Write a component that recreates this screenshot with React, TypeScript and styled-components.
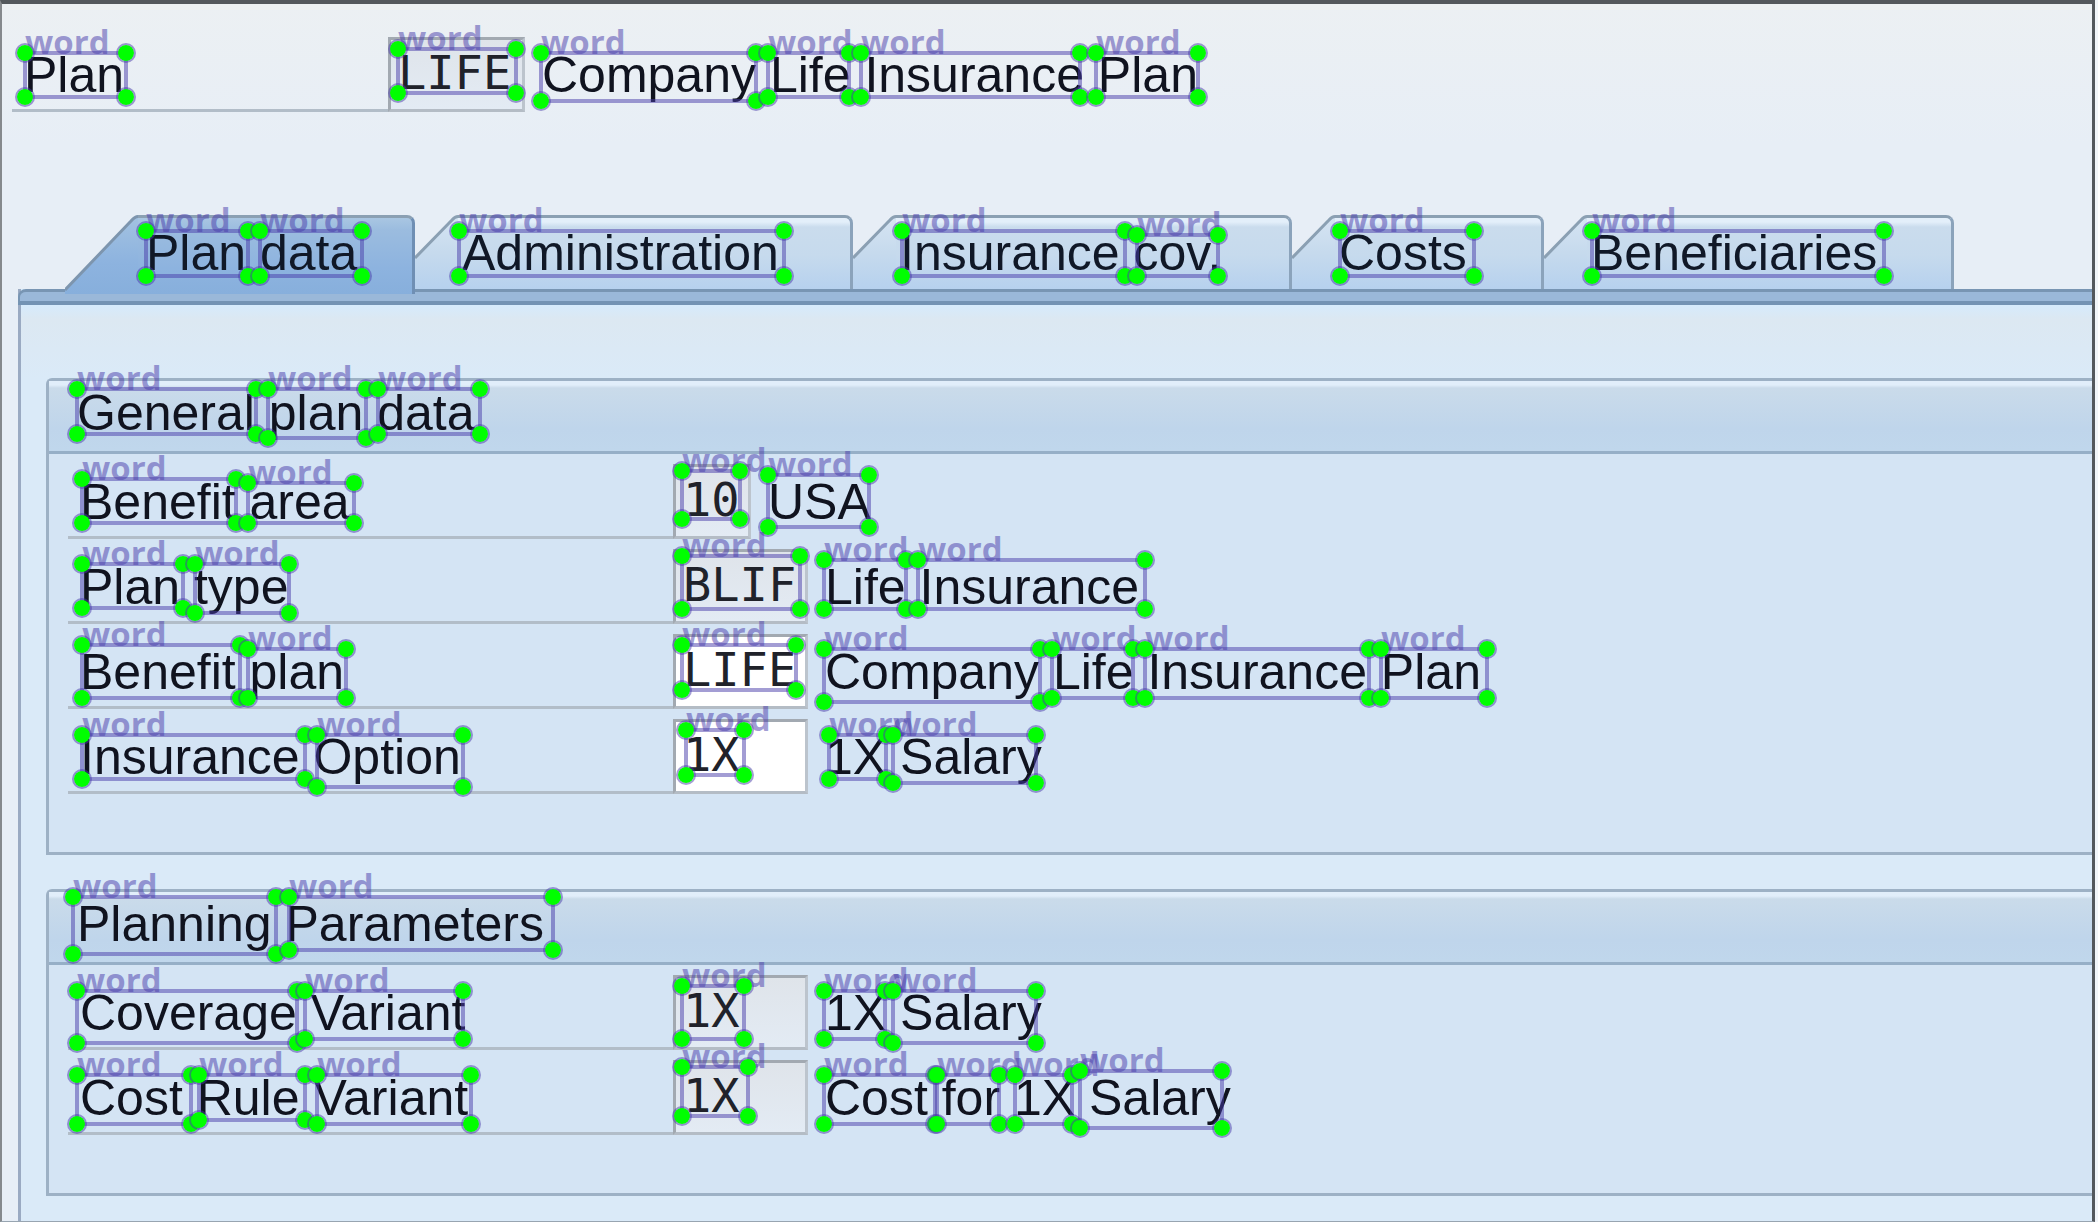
import React from "react";
import styled, { createGlobalStyle } from "styled-components";

const GlobalStyle = createGlobalStyle`
  *, *::before, *::after { box-sizing: border-box; }
  body { margin: 0; background: #f1f5f9; }
`;

const sans = `"Liberation Sans", Arial, sans-serif`;
const mono = `"DejaVu Sans Mono", "Liberation Mono", monospace`;

const Screen = styled.main`
  position: relative;
  display: flex;
  flex-direction: column;
  min-height: 100vh;
  margin-right: 3px;
  border: solid #53585d;
  border-width: 4px 3px 1px 2px;
  border-left-color: #85898d;
  border-bottom-color: #98a5b1;
  background: linear-gradient(#ecf0f3 0, #e7eef6 140px, #e7eef6 100%);
  color: #10131f;
  font: 50px/54px ${sans};
`;

const HeaderForm = styled.div`
  padding: 33px 0 0 10px;
`;

const Row = styled.div`
  display: flex;
  height: 75px;
`;

const Label = styled.label<{ $width: number; $indent: number }>`
  flex: none;
  width: ${(p) => p.$width}px;
  padding-left: ${(p) => p.$indent}px;
  border-bottom: 3px solid #b2bdc8;
  line-height: 77px;
`;

const Field = styled.input<{ $width: number; $editable?: boolean }>`
  flex: none;
  width: ${(p) => p.$width}px;
  height: 75px;
  margin: 0;
  padding: 0 0 5px 7px;
  border: 3px solid #a2a9b1;
  border-right-color: #bcc4cd;
  border-bottom-color: #b4bcc5;
  border-radius: 0;
  outline: none;
  background: ${(p) => (p.$editable ? "#ffffff" : "linear-gradient(#dfe4ea, #e3ebf4)")};
  color: #20222a;
  font: 47px/60px ${mono};
`;

const Description = styled.span`
  padding-left: 17px;
  line-height: 77px;
  white-space: nowrap;
`;

const TabStrip = styled.div`
  position: relative;
  z-index: 1;
  display: flex;
  height: 74px;
  margin-top: 103px;
  padding-left: 63px;
`;

const Tab = styled.button<{ $active?: boolean; $width: number }>`
  display: flex;
  flex: none;
  width: ${(p) => p.$width}px;
  height: ${(p) => (p.$active ? 79 : 74)}px;
  margin: 0;
  padding: 0;
  border: 0;
  background: none;
  color: #101827;
  font: 50px/54px ${sans};
  text-align: left;
`;

const TabSlope = styled.svg`
  display: block;
  flex: none;
`;

const TabFace = styled.span<{ $active?: boolean }>`
  flex: 1;
  height: 100%;
  padding: 8px 0 0 ${(p) => (p.$active ? 8 : 4)}px;
  border-top: 3px solid #8ba0b3;
  border-right: 3px solid ${(p) => (p.$active ? "#6f8fb4" : "#8ba3bb")};
  border-radius: 0 8px 0 0;
  background: ${(p) =>
    p.$active
      ? "linear-gradient(#a9c6e2 0, #9bbcdf 12px, #8db3df 50px, #87afdc 100%)"
      : "linear-gradient(#e3effa 0, #e3effa 4px, #cadced 9px, #c6daed 38px, #b6d1ee 100%)"};
  white-space: nowrap;
`;

const Panel = styled.section`
  flex: 1;
  margin-left: 16px;
  border-left: 3px solid #9aaac2;
  background: linear-gradient(#d5ebfd 15px, #dce8f2 30px, #daeaf8 90px, #daeaf8 100%);
`;

const PanelBand = styled.div`
  height: 16px;
  margin-left: -3px;
  border-top: 3px solid #7895b3;
  border-bottom: 4px solid #7393b4;
  border-left: 2px solid #7895b3;
  border-radius: 8px 0 0 0;
  background: #9ab8d9;
`;

const Groups = styled.div`
  display: flex;
  flex-direction: column;
  gap: 34px;
  padding: 73px 0 24px 25px;
`;

const Group = styled.section`
  border: solid #9db1c5;
  border-width: 3px 0 3px 3px;
  border-radius: 6px 0 0 0;
  background: #d4e4f4;
`;

const GroupTitle = styled.h2`
  height: 73px;
  margin: 0;
  padding: 5px 0 0 28px;
  border-bottom: 3px solid #96afc7;
  background: linear-gradient(#e1eefa 0, #e1eefa 4px, #cadbea 7px, #bfd5eb 48px, #c0d7ec 100%);
  font: 50px/54px ${sans};
`;

const GroupRows = styled.div`
  display: flex;
  flex-direction: column;
  gap: 10px;
  padding: 10px 0 58px 19px;
`;

/* Word annotations drawn over the form. */
const Annotations = styled.div`
  position: absolute;
  top: -4px;
  left: -2px;
  z-index: 2;
  pointer-events: none;
`;

const WordBox = styled.div<{ $x: number; $y: number; $w: number; $h: number }>`
  position: absolute;
  left: ${(p) => p.$x - 2}px;
  top: ${(p) => p.$y - 2}px;
  width: ${(p) => p.$w + 4}px;
  height: ${(p) => p.$h + 4}px;
  border: 4px solid rgba(72, 60, 170, 0.5);
`;

const WordTag = styled.span`
  position: absolute;
  left: -2px;
  bottom: 100%;
  color: rgba(72, 60, 170, 0.5);
  font: 700 33px/26px "Open Sans", "Noto Sans", sans-serif;
  white-space: nowrap;
`;

const Handle = styled.i<{ $right?: boolean; $bottom?: boolean }>`
  position: absolute;
  ${(p) => (p.$right ? "right" : "left")}: -12px;
  ${(p) => (p.$bottom ? "bottom" : "top")}: -12px;
  width: 20px;
  height: 20px;
  border: 2px solid rgba(72, 60, 170, 0.5);
  border-radius: 50%;
  background: #00ff00 padding-box;
`;

type FieldData = {
  id: string;
  label: string;
  value: string;
  width: number;
  text: string;
  editable?: boolean;
};

const general: FieldData[] = [
  { id: "area", label: "Benefit area", value: "10", width: 78, text: "USA" },
  { id: "type", label: "Plan type", value: "BLIF", width: 135, text: "Life Insurance" },
  { id: "plan", label: "Benefit plan", value: "LIFE", width: 135, text: "Company Life Insurance Plan", editable: true },
  { id: "option", label: "Insurance Option", value: "1X", width: 135, text: "1X Salary", editable: true },
];

const planning: FieldData[] = [
  { id: "coverage", label: "Coverage Variant", value: "1X", width: 135, text: "1X Salary" },
  { id: "cost", label: "Cost Rule Variant", value: "1X", width: 135, text: "Cost for 1X Salary" },
];

const tabs = [
  { title: "Plan data", width: 350 },
  { title: "Administration", width: 438 },
  { title: "Insurance cov.", width: 439 },
  { title: "Costs", width: 252 },
  { title: "Beneficiaries", width: 410 },
];

/* left, top, right, bottom of every annotated word */
const words: [number, number, number, number][] = [
  [25, 53, 126, 97], [398, 49, 516, 93], [541, 53, 756, 101], [768, 53, 849, 97],
  [861, 53, 1080, 97], [1096, 53, 1198, 97],
  [146, 231, 248, 276], [260, 231, 362, 276], [459, 231, 784, 276], [902, 231, 1125, 276],
  [1137, 235, 1218, 276], [1340, 231, 1474, 276], [1592, 231, 1884, 276],
  [77, 389, 256, 434], [268, 389, 366, 438], [378, 389, 480, 434],
  [82, 479, 236, 523], [248, 483, 354, 523], [682, 471, 740, 519], [768, 475, 869, 527],
  [82, 564, 183, 608], [195, 564, 289, 613], [682, 556, 800, 609], [824, 560, 906, 609],
  [918, 560, 1145, 609],
  [82, 645, 240, 698], [248, 649, 346, 698], [682, 645, 796, 690], [824, 649, 1040, 702],
  [1052, 649, 1133, 698], [1145, 649, 1369, 698], [1381, 649, 1487, 698],
  [82, 735, 305, 779], [317, 735, 463, 787], [686, 730, 744, 775], [829, 735, 886, 779],
  [893, 735, 1036, 783],
  [73, 897, 276, 954], [289, 897, 553, 950],
  [77, 991, 297, 1043], [305, 991, 463, 1039], [682, 986, 744, 1039], [824, 991, 885, 1039],
  [893, 991, 1036, 1043],
  [77, 1075, 191, 1124], [199, 1075, 305, 1120], [317, 1075, 471, 1124], [682, 1067, 748, 1116],
  [824, 1075, 935, 1124], [937, 1075, 999, 1124], [1015, 1075, 1072, 1124], [1080, 1071, 1222, 1128],
];

function FormRow({ data, labelWidth, indent }: { data: FieldData; labelWidth: number; indent: number }) {
  return (
    <Row>
      <Label htmlFor={data.id} $width={labelWidth} $indent={indent}>
        {data.label}
      </Label>
      <Field
        id={data.id}
        $width={data.width}
        $editable={data.editable}
        readOnly={!data.editable}
        defaultValue={data.value}
      />
      <Description>{data.text}</Description>
    </Row>
  );
}

function ActiveSlope() {
  return (
    <TabSlope width="73" height="79" viewBox="0 0 73 79" aria-hidden="true">
      <defs>
        <linearGradient id="activeFill" x1="0" y1="0" x2="0" y2="1">
          <stop offset="0" stopColor="#a3c2e1" />
          <stop offset="0.6" stopColor="#8db3df" />
          <stop offset="1" stopColor="#87afdc" />
        </linearGradient>
      </defs>
      <path d="M0 79V75L68 4Q71 1 73 1V79Z" fill="url(#activeFill)" />
      <path d="M0 75L66 6Q70 1.500 73 1.500" fill="none" stroke="#7d95ae" strokeWidth="3" />
    </TabSlope>
  );
}

function Slope() {
  return (
    <TabSlope width="43" height="74" viewBox="0 0 43 74" aria-hidden="true">
      <defs>
        <linearGradient id="slopeFill" x1="0" y1="0" x2="0" y2="1">
          <stop offset="0" stopColor="#d6e5f3" />
          <stop offset="0.5" stopColor="#c6daed" />
          <stop offset="1" stopColor="#b6d1ee" />
        </linearGradient>
      </defs>
      <path d="M0 74V43L37 5Q40 1 43 1V74Z" fill="url(#slopeFill)" />
      <path d="M0 43L37 5Q40 1.500 43 1.500" fill="none" stroke="#8ba0b3" strokeWidth="3" />
    </TabSlope>
  );
}

export default function App() {
  return (
    <>
      <GlobalStyle />
      <Screen>
        <HeaderForm>
          <FormRow
            data={{ id: "header", label: "Plan", value: "LIFE", width: 137, text: "Company Life Insurance Plan" }}
            labelWidth={376}
            indent={12}
          />
        </HeaderForm>
        <TabStrip role="tablist">
          {tabs.map((tab, i) => (
            <Tab key={tab.title} type="button" role="tab" aria-selected={i === 0} $active={i === 0} $width={tab.width}>
              {i === 0 ? <ActiveSlope /> : <Slope />}
              <TabFace $active={i === 0}>{tab.title}</TabFace>
            </Tab>
          ))}
        </TabStrip>
        <Panel role="tabpanel">
          <PanelBand />
          <Groups>
            <Group>
              <GroupTitle>General plan data</GroupTitle>
              <GroupRows>
                {general.map((row) => (
                  <FormRow key={row.id} data={row} labelWidth={605} indent={12} />
                ))}
              </GroupRows>
            </Group>
            <Group>
              <GroupTitle>Planning Parameters</GroupTitle>
              <GroupRows>
                {planning.map((row) => (
                  <FormRow key={row.id} data={row} labelWidth={605} indent={12} />
                ))}
              </GroupRows>
            </Group>
          </Groups>
        </Panel>
        <Annotations>
          {words.map(([x, y, right, bottom]) => (
            <WordBox key={`${x}-${y}`} $x={x} $y={y} $w={right - x} $h={bottom - y}>
              <WordTag>word</WordTag>
              <Handle />
              <Handle $right />
              <Handle $bottom />
              <Handle $right $bottom />
            </WordBox>
          ))}
        </Annotations>
      </Screen>
    </>
  );
}
